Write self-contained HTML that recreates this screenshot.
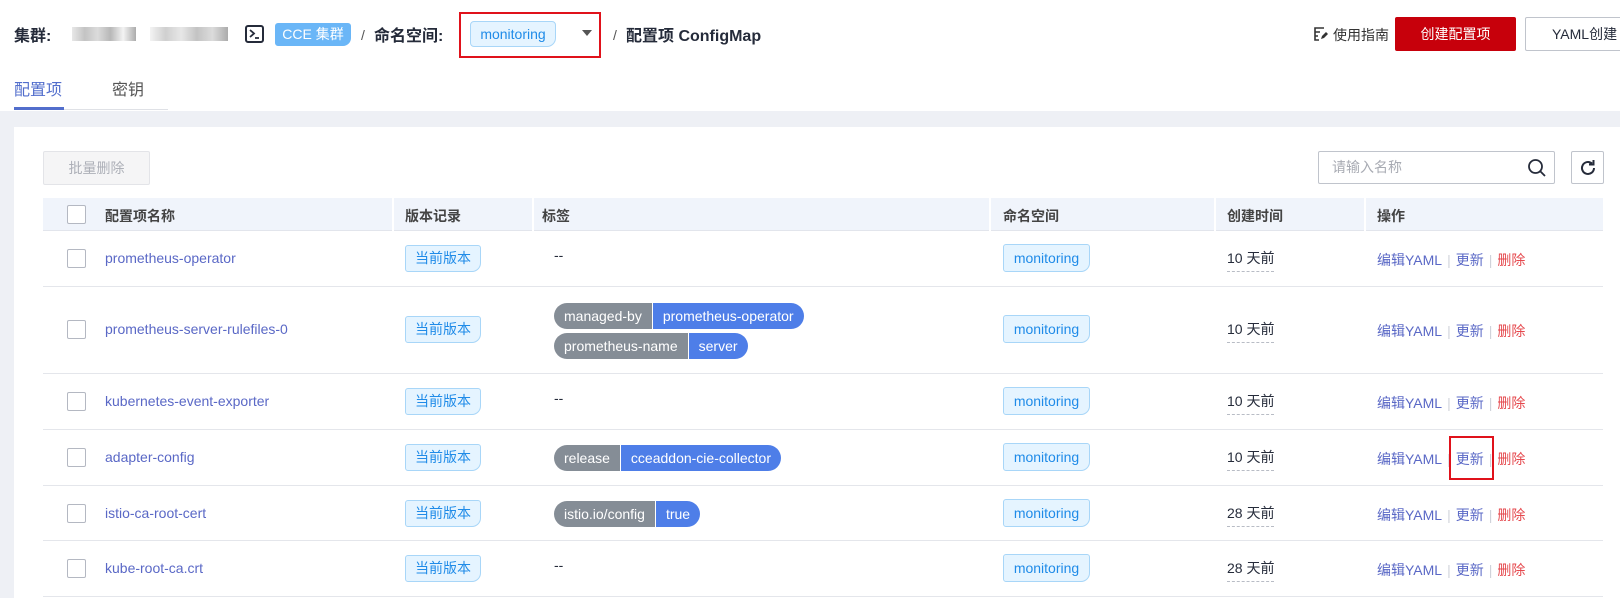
<!DOCTYPE html>
<html><head><meta charset="utf-8"><style>
*{box-sizing:border-box;margin:0;padding:0}
body{width:1620px;height:598px;overflow:hidden;background:#fff;font-family:"Liberation Sans","Noto Sans CJK SC",sans-serif;font-size:14px;color:#252b3a;position:relative}
.a{position:absolute;white-space:nowrap}
.gray{position:absolute;left:0;top:111px;width:1620px;height:487px;background:#eef0f5}
.card{position:absolute;left:14px;top:127px;width:1606px;height:471px;background:#fff}
.hdr{position:absolute;left:43px;top:198px;width:1560px;height:33px;background:#f0f4fb;border-bottom:1px solid #e2e5ec}
.sep{position:absolute;top:0;width:2px;height:33px;background:#fff}
.row{position:absolute;left:43px;width:1560px;border-bottom:1px solid #e4e6eb}
.cb{position:absolute;width:19px;height:19px;border:1px solid #b4b8c2;border-radius:2px;background:#fff}
.ver{position:absolute;left:362px;width:76px;height:27px;line-height:25px;text-align:center;background:#e5f4ff;border:1px solid #a8d6f8;border-radius:3px 3px 9px 3px;color:#1f8be8;font-size:14px}
.ns{position:absolute;left:960px;width:87px;height:28px;line-height:26px;text-align:center;background:#e5f4ff;border:1px solid #a8d6f8;border-radius:3px 3px 9px 3px;color:#1f8be8;font-size:14px}
.name{position:absolute;left:62px;color:#5a68c6;font-size:14px}
.time{position:absolute;left:1184px;font-size:14px;color:#252b3a;border-bottom:1px dashed #b8bcc5;padding-bottom:3px}
.ops{position:absolute;left:1334px;font-size:14px;color:#5a68c6}
.ops i{font-style:normal;color:#d0d3da;margin:0 5px}
.ops b{font-weight:normal;color:#e5484d}
.lbl{position:absolute;left:511px;height:26px;display:flex;font-size:14px;color:#fff;line-height:26px}
.lbl span{padding:0 10px}
.lbl .k{background:#858d96;border-radius:13px 0 0 13px;border-right:1px solid #fff}
.lbl .v{background:#4e7ee8;border-radius:0 13px 13px 0}
.dash{position:absolute;left:511px;color:#252b3a}
</style></head><body>
<div class="a" style="left:14px;top:22px;font-size:16px;font-weight:bold">集群:</div>
<div class="a" style="left:72px;top:27px;width:64px;height:14px;background:linear-gradient(90deg,#ddd,#aaa,#ccc,#999,#eee,#888);opacity:.7"></div>
<div class="a" style="left:150px;top:27px;width:78px;height:14px;background:linear-gradient(90deg,#eee,#bbb,#ddd,#aaa,#ccc,#888);opacity:.7"></div>
<svg class="a" style="left:245px;top:25px" width="19" height="18" viewBox="0 0 19 18"><rect x="1" y="1" width="17" height="16" rx="2" fill="none" stroke="#252b3a" stroke-width="2"/><path d="M5 5l4 3.5-4 3.5M10 13h4" fill="none" stroke="#252b3a" stroke-width="1.8"/></svg>
<div class="a" style="left:275px;top:23px;width:76px;height:23px;background:#6ab6f7;border-radius:3px 3px 8px 3px;color:#fff;font-size:14px;line-height:23px;text-align:center">CCE 集群</div>
<div class="a" style="left:361px;top:27px;color:#555">/</div>
<div class="a" style="left:374px;top:22px;font-size:16px;font-weight:bold">命名空间:</div>
<div class="a" style="left:459px;top:12px;width:142px;height:46px;border:2px solid #e0121b"></div>
<div class="a" style="left:470px;top:21px;width:86px;height:26px;background:#e5f4ff;border:1px solid #a8d6f8;border-radius:4px 4px 9px 4px;color:#1f8be8;line-height:24px;text-align:center">monitoring</div>
<div class="a" style="left:582px;top:30px;width:0;height:0;border-left:5px solid transparent;border-right:5px solid transparent;border-top:6px solid #555"></div>
<div class="a" style="left:613px;top:27px;color:#555">/</div>
<div class="a" style="left:626px;top:22px;font-size:16px;font-weight:bold">配置项 ConfigMap</div>

<svg class="a" style="left:1313px;top:27px" width="15" height="14" viewBox="0 0 15 14"><path d="M11 1H2v12h4M2 5h5M2 9h3" fill="none" stroke="#333" stroke-width="1.6"/><path d="M8 12l1-3 4-4 2 2-4 4z" fill="#333"/></svg>
<div class="a" style="left:1333px;top:25px;font-size:14px;color:#333">使用指南</div>
<div class="a" style="left:1395px;top:17px;width:121px;height:34px;background:#c7000b;border-radius:2px;color:#fff;text-align:center;line-height:34px">创建配置项</div>
<div class="a" style="left:1525px;top:17px;width:110px;height:34px;border:1px solid #c0c4cc;border-radius:2px;line-height:32px;padding-left:26px">YAML创建</div>

<div class="a" style="left:14px;top:76px;font-size:16px;color:#526ecc">配置项</div>
<div class="a" style="left:112px;top:76px;font-size:16px;color:#555">密钥</div>
<div class="a" style="left:14px;top:109px;width:154px;height:1px;background:#dfe1e6"></div>
<div class="a" style="left:14px;top:107px;width:50px;height:3px;background:#526ecc"></div>

<div class="gray"></div>
<div class="card"></div>
<div class="a" style="left:43px;top:151px;width:107px;height:34px;background:#f5f5f6;border:1px solid #e3e4e8;border-radius:2px;color:#adb0b8;text-align:center;line-height:32px">批量删除</div>
<div class="a" style="left:1318px;top:151px;width:237px;height:33px;border:1px solid #c0c4cc;border-radius:2px;color:#a8abb3;line-height:31px;padding-left:13px">请输入名称</div>
<svg class="a" style="left:1527px;top:158px" width="20" height="20" viewBox="0 0 20 20"><circle cx="8.5" cy="8.5" r="6.5" fill="none" stroke="#252b3a" stroke-width="1.8"/><path d="M13 13l5 5" stroke="#252b3a" stroke-width="1.8"/></svg>
<div class="a" style="left:1571px;top:151px;width:33px;height:33px;border:1px solid #c0c4cc;border-radius:2px"></div>
<svg class="a" style="left:1578px;top:158px" width="20" height="20" viewBox="0 0 20 20"><path d="M16 10a6 6 0 1 1-2-4.5" fill="none" stroke="#252b3a" stroke-width="2"/><path d="M15.5 2v4.5H11" fill="none" stroke="#252b3a" stroke-width="2"/></svg>

<div class="hdr">
<div class="cb" style="left:24px;top:7px"></div>
<div class="a" style="left:62px;top:8px;font-weight:bold;color:#444">配置项名称</div>
<div class="sep" style="left:349px"></div>
<div class="a" style="left:362px;top:8px;font-weight:bold;color:#444">版本记录</div>
<div class="sep" style="left:489px"></div>
<div class="a" style="left:499px;top:8px;font-weight:bold;color:#444">标签</div>
<div class="sep" style="left:946px"></div>
<div class="a" style="left:960px;top:8px;font-weight:bold;color:#444">命名空间</div>
<div class="sep" style="left:1171px"></div>
<div class="a" style="left:1184px;top:8px;font-weight:bold;color:#444">创建时间</div>
<div class="sep" style="left:1321px"></div>
<div class="a" style="left:1334px;top:8px;font-weight:bold;color:#444">操作</div>
</div>

<div class="row" style="top:231px;height:56px">
<div class="cb" style="left:24px;top:18px"></div><div class="name" style="top:19px">prometheus-operator</div>
<div class="ver" style="top:14px">当前版本</div><div class="dash" style="top:16px">--</div>
<div class="ns" style="top:13px">monitoring</div><div class="time" style="top:17px">10 天前</div>
<div class="ops" style="top:19px">编辑YAML<i>|</i>更新<i>|</i><b>删除</b></div></div>

<div class="row" style="top:287px;height:87px">
<div class="cb" style="left:24px;top:33px"></div><div class="name" style="top:34px">prometheus-server-rulefiles-0</div>
<div class="ver" style="top:29px">当前版本</div>
<div class="lbl" style="top:16px"><span class="k">managed-by</span><span class="v">prometheus-operator</span></div>
<div class="lbl" style="top:46px"><span class="k">prometheus-name</span><span class="v">server</span></div>
<div class="ns" style="top:28px">monitoring</div><div class="time" style="top:32px">10 天前</div>
<div class="ops" style="top:34px">编辑YAML<i>|</i>更新<i>|</i><b>删除</b></div></div>

<div class="row" style="top:374px;height:56px">
<div class="cb" style="left:24px;top:18px"></div><div class="name" style="top:19px">kubernetes-event-exporter</div>
<div class="ver" style="top:14px">当前版本</div><div class="dash" style="top:16px">--</div>
<div class="ns" style="top:13px">monitoring</div><div class="time" style="top:17px">10 天前</div>
<div class="ops" style="top:19px">编辑YAML<i>|</i>更新<i>|</i><b>删除</b></div></div>

<div class="row" style="top:430px;height:56px">
<div class="cb" style="left:24px;top:18px"></div><div class="name" style="top:19px">adapter-config</div>
<div class="ver" style="top:14px">当前版本</div>
<div class="lbl" style="top:15px"><span class="k">release</span><span class="v">cceaddon-cie-collector</span></div>
<div class="ns" style="top:13px">monitoring</div><div class="time" style="top:17px">10 天前</div>
<div class="ops" style="top:19px">编辑YAML<i>|</i>更新<i>|</i><b>删除</b></div>
<div class="a" style="left:1406px;top:6px;width:45px;height:44px;border:2px solid #e0121b"></div></div>

<div class="row" style="top:486px;height:55px">
<div class="cb" style="left:24px;top:18px"></div><div class="name" style="top:19px">istio-ca-root-cert</div>
<div class="ver" style="top:14px">当前版本</div>
<div class="lbl" style="top:15px"><span class="k">istio.io/config</span><span class="v">true</span></div>
<div class="ns" style="top:13px">monitoring</div><div class="time" style="top:17px">28 天前</div>
<div class="ops" style="top:19px">编辑YAML<i>|</i>更新<i>|</i><b>删除</b></div></div>

<div class="row" style="top:541px;height:56px">
<div class="cb" style="left:24px;top:18px"></div><div class="name" style="top:19px">kube-root-ca.crt</div>
<div class="ver" style="top:14px">当前版本</div><div class="dash" style="top:16px">--</div>
<div class="ns" style="top:13px">monitoring</div><div class="time" style="top:17px">28 天前</div>
<div class="ops" style="top:19px">编辑YAML<i>|</i>更新<i>|</i><b>删除</b></div></div>
</body></html>
